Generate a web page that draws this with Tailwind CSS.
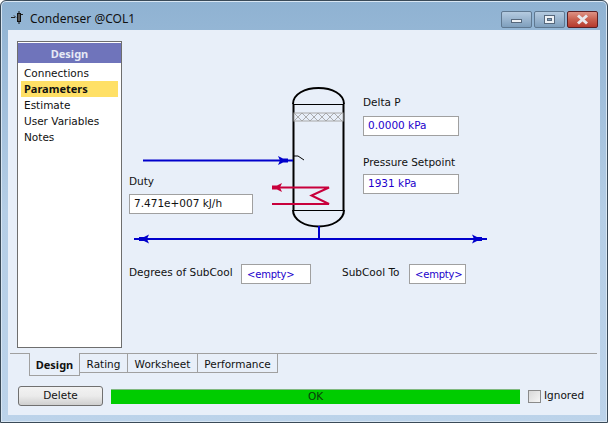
<!DOCTYPE html>
<html lang="en">
<head>
    <meta charset="UTF-8">
    <title>Condenser @COL1</title>
    <script src="https://cdn.jsdelivr.net/npm/@tailwindcss/browser@4"></script>
</head>
<body class="m-0 w-[608px] h-[423px] overflow-hidden bg-white font-['DejaVu_Sans',sans-serif] text-[10.5px] text-[#111]">
    <div class="w-[608px] h-[423px] flex flex-col rounded-t-[6px] border border-[#3a4a58] bg-gradient-to-b from-[#8fb2d2] via-[#b5cee6] to-[#bcd3ea] shadow-[inset_0_0_0_1px_#d8e6f3]">
        <!-- title bar -->
        <div class="h-[29px] shrink-0 flex items-center pl-[9px] pr-[9px]">
            <svg width="14" height="16" viewBox="0 0 14 16" class="shrink-0 mt-[4px]">
                <path d="M1 7.500h4M4 5.500l2 2M11 4.500h2" stroke="#222" stroke-width="1" fill="none"/>
                <rect x="7.500" y="3.500" width="3" height="8" fill="#555" stroke="#111" stroke-width="1"/>
                <path d="M9 1v3M9 11v3" stroke="#111" stroke-width="1"/>
            </svg>
            <span class="ml-[6px] mt-[6px] font-['Noto_Sans',sans-serif] text-[12px] text-[#111]">Condenser @COL1</span>
            <div class="ml-auto flex gap-[2px] mt-[7px]">
                <div class="w-[31px] h-[17px] flex items-center justify-center rounded-[2px] border border-[#5f7890] bg-gradient-to-b from-[#b5cbe0] to-[#7f9fbd]">
                    <div class="w-[11px] h-[4px] mt-[3px] bg-[#eef2f6] border border-[#56687c]"></div>
                </div>
                <div class="w-[31px] h-[17px] flex items-center justify-center rounded-[2px] border border-[#5f7890] bg-gradient-to-b from-[#b5cbe0] to-[#7f9fbd]">
                    <div class="w-[11px] h-[9px] bg-[#eef2f6] border border-[#56687c] flex items-center justify-center"><div class="w-[5px] h-[3px] bg-[#7f9fbd] border border-[#56687c]"></div></div>
                </div>
                <div class="w-[31px] h-[17px] flex items-center justify-center rounded-[2px] border border-[#5a1f24] bg-gradient-to-b from-[#dd9285] via-[#c8604f] to-[#b5392d]">
                    <svg width="15" height="11" viewBox="0 0 15 11"><path d="M3 1.500l9 8M12 1.500l-9 8" stroke="#e9e9ee" stroke-width="3" fill="none"/></svg>
                </div>
            </div>
        </div>
        <!-- client area -->
        <div class="mx-[7px] flex-1 flex flex-col bg-[#e8eff9] min-h-0">
            <div class="flex h-[323px] shrink-0 pl-[9px] pt-[11px]">
                <!-- side nav -->
                <div class="w-[105px] h-[307px] shrink-0 flex flex-col bg-white border border-[#6e6e6e] pt-px">
                    <div class="h-[20px] pt-[2px] flex items-center justify-center bg-[#6f74bb] text-[#e6e9f5] font-['Noto_Sans',sans-serif] font-bold text-[11px]">Design</div>
                    <div class="flex flex-col pl-[3px] pr-[3px] leading-[16px] pt-[2px]">
                        <div class="pl-[3px] h-[16px]">Connections</div>
                        <div class="pl-[3px] h-[16px] bg-[#ffe066] font-['Noto_Sans',sans-serif] font-bold text-[11px]">Parameters</div>
                        <div class="pl-[3px] h-[16px]">Estimate</div>
                        <div class="pl-[3px] h-[16px]">User Variables</div>
                        <div class="pl-[3px] h-[16px]">Notes</div>
                    </div>
                </div>
                <!-- diagram canvas: page coords shifted by (122,41) -->
                <div class="relative flex-1">
                    <svg width="470" height="312" viewBox="122 41 470 312" class="absolute left-0 top-0">
                        <g fill="none" stroke="#000">
                            <path d="M293 104C293 94 305 88 318.500 88C332 88 344 94 344 104" stroke-width="2"/>
                            <path d="M293 210C293 220 305 226.500 318.500 226.500C332 226.500 344 220 344 210" stroke-width="2"/>
                            <path d="M293.500 104V210M343.500 104V210" stroke-width="2"/>
                            <path d="M293 104.500H344M293 210.500H344" stroke-width="1"/>
                        </g>
                        <rect x="294" y="113" width="49" height="8" fill="#e8eff9" stroke="#a8a8a8" stroke-width="1"/>
                        <path d="M294 113l8 8 8-8 8 8 8-8 8 8 8-8M294 121l8-8 8 8 8-8 8 8 8-8 8 8" fill="none" stroke="#9a9a9a" stroke-width="0.8"/>
                        <path d="M294 156h4l6 4" fill="none" stroke="#000" stroke-width="1"/>
                        <!-- feed -->
                        <path d="M143 160.500H293" stroke="#0000cc" stroke-width="2"/>
                        <path d="M278 156l5 2.500h5v4h-5l-5 2.500 2-4.500z" fill="#0000cc"/>
                        <!-- coil -->
                        <path d="M272 187.500H329L311.500 195.500L329 204H272" fill="none" stroke="#c8003c" stroke-width="2"/>
                        <path d="M282 183l-5 2.500h-5v4h5l5 2.500-2-4.500z" fill="#c8003c"/>
                        <!-- product -->
                        <path d="M319 226V239" stroke="#0000cc" stroke-width="2"/>
                        <path d="M134 239H487" stroke="#0000cc" stroke-width="2"/>
                        <path d="M149 234.500l-5 2.500h-5v4h5l5 2.500-2-4.500z" fill="#0000cc"/>
                        <path d="M472 234.500l5 2.500h5v4h-5l-5 2.500 2-4.500z" fill="#0000cc"/>
                    </svg>

                    <label class="absolute left-[241px] top-[55px] leading-[13px]">Delta P</label>
                    <div class="absolute left-[241px] top-[75px] w-[96px] h-[20px] flex items-center pl-[4px] bg-white border border-[#a0a0a0] text-[#2200cc]">0.0000 kPa</div>
                    <label class="absolute left-[241px] top-[115px] leading-[13px]">Pressure Setpoint</label>
                    <div class="absolute left-[241px] top-[133px] w-[96px] h-[20px] flex items-center pl-[4px] bg-white border border-[#a0a0a0] text-[#2200cc]">1931 kPa</div>
                    <label class="absolute left-[7px] top-[134px] leading-[13px]">Duty</label>
                    <div class="absolute left-[7px] top-[153px] w-[124px] h-[20px] flex items-center pl-[4px] bg-white border border-[#a0a0a0]">7.471e+007 kJ/h</div>
                    <label class="absolute left-[7px] top-[225px] leading-[13px]">Degrees of SubCool</label>
                    <div class="absolute left-[119px] top-[223px] w-[70px] h-[20px] flex items-center pl-[5px] bg-white border border-[#a0a0a0] text-[#2200cc] text-[10px] tracking-[-0.2px]">&lt;empty&gt;</div>
                    <label class="absolute left-[220px] top-[225px] leading-[13px]">SubCool To</label>
                    <div class="absolute left-[287px] top-[223px] w-[57px] h-[20px] flex items-center pl-[5px] bg-white border border-[#a0a0a0] text-[#2200cc] text-[10px] tracking-[-0.2px]">&lt;empty&gt;</div>
                </div>
            </div>
            <!-- tabs -->
            <div class="flex h-[24px] shrink-0 ml-[2px] mr-[3px] pl-[19px] border-t border-[#a0a0a0] items-start">
                <div class="w-[51px] h-[23px] -mt-px pt-[3px] flex items-center justify-center font-['Noto_Sans',sans-serif] font-bold text-[11px] bg-[#e8eff9] border-x border-b border-[#a0a0a0]">Design</div>
                <div class="w-[48px] h-[19px] pt-[3px] flex items-center justify-center border-r border-b border-[#a0a0a0]">Rating</div>
                <div class="w-[70px] h-[19px] pt-[3px] flex items-center justify-center border-r border-b border-[#a0a0a0]">Worksheet</div>
                <div class="w-[80px] h-[19px] pt-[3px] flex items-center justify-center border-r border-b border-[#a0a0a0]">Performance</div>
            </div>
            <!-- bottom bar -->
            <div class="flex items-center h-[20px] mt-[9px] pl-[10px]">
                <button class="w-[85px] h-[20px] rounded-[3px] border border-[#707070] bg-gradient-to-b from-[#f2f2f2] via-[#ebebeb] to-[#cfcfcf]">Delete</button>
                <div class="ml-[8px] w-[409px] h-[15px] flex items-center justify-center bg-[#00cc00] border-t border-[#7fb87f] text-[#0a3a0a]">OK</div>
                <div class="ml-[8px] w-[13px] h-[13px] bg-gradient-to-br from-[#d8d8d8] to-[#f6f6f6] border border-[#8a8a8a]"></div>
                <span class="ml-[3px]">Ignored</span>
            </div>
        </div>
        <div class="h-[7px] shrink-0"></div>
    </div>
</body>
</html>
